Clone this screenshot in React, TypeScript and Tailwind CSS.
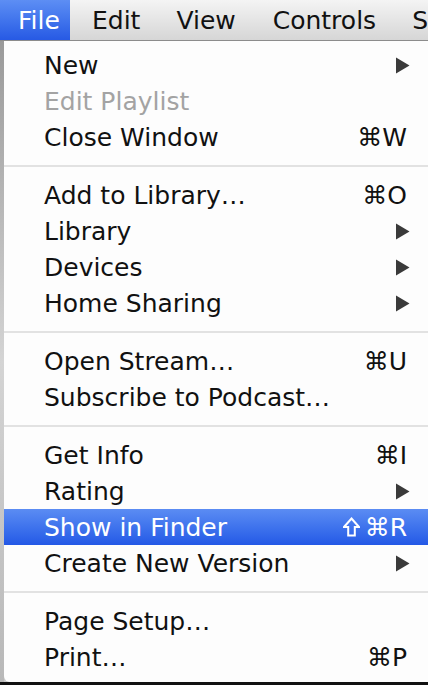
import React from 'react';

type Item = {
  label: string;
  shortcut?: string;
  shift?: boolean;
  submenu?: boolean;
  disabled?: boolean;
  active?: boolean;
};

const groups: Item[][] = [
  [
    { label: 'New', submenu: true },
    { label: 'Edit Playlist', disabled: true },
    { label: 'Close Window', shortcut: '⌘W' },
  ],
  [
    { label: 'Add to Library…', shortcut: '⌘O' },
    { label: 'Library', submenu: true },
    { label: 'Devices', submenu: true },
    { label: 'Home Sharing', submenu: true },
  ],
  [
    { label: 'Open Stream…', shortcut: '⌘U' },
    { label: 'Subscribe to Podcast…' },
  ],
  [
    { label: 'Get Info', shortcut: '⌘I' },
    { label: 'Rating', submenu: true },
    { label: 'Show in Finder', shortcut: '⌘R', shift: true, active: true },
    { label: 'Create New Version', submenu: true },
  ],
  [
    { label: 'Page Setup…' },
    { label: 'Print…', shortcut: '⌘P' },
  ],
];

function Arrow({ active }: { active?: boolean }) {
  return (
    <svg width="15" height="17" viewBox="0 0 15 17" className="mr-[18px]">
      <path d="M1 0.5 L14.5 8.5 L1 16.5 Z" fill={active ? '#ffffff' : '#3a3a3a'} />
    </svg>
  );
}

// outlined shift arrow
function Shift() {
  return (
    <svg width="17" height="20" viewBox="0 0 17 20" className="mr-[5px]">
      <path
        d="M8.5 1.5 L16 10 L11.8 10 L11.8 18.5 L5.2 18.5 L5.2 10 L1 10 Z"
        fill="none"
        stroke="currentColor"
        strokeWidth="2"
        strokeLinejoin="miter"
      />
    </svg>
  );
}

function Row({ item }: { item: Item }) {
  const color = item.active
    ? 'text-white bg-gradient-to-b from-[#5b8cf3] to-[#2458e6]'
    : item.disabled
      ? 'text-[#a3a3a3]'
      : 'text-[#111111]';
  return (
    <div className={`flex h-[36px] items-center justify-between pl-[40px] ${color}`}>
      <span>{item.label}</span>
      {item.shortcut && (
        <span className="mr-[21px] flex items-center">
          {item.shift && <Shift />}
          {item.shortcut}
        </span>
      )}
      {item.submenu && <Arrow active={item.active} />}
    </div>
  );
}

export default function App() {
  return (
    <div
      className="flex h-[685px] w-[428px] flex-col overflow-hidden bg-[#c9c9c9] text-[25px] leading-none"
      style={{ fontFamily: '"DejaVu Sans", "Liberation Sans", sans-serif' }}
    >
      <div className="flex h-[41px] shrink-0 items-stretch border-b border-[#8c8c8c] bg-gradient-to-b from-[#f4f4f4] to-[#d6d6d6] text-[#111]">
        <div className="flex w-[82px] items-center bg-gradient-to-b from-[#5d8ef4] to-[#2759e4] pl-[18px] text-white">File</div>
        <div className="flex items-center pl-[22px]">Edit</div>
        <div className="flex items-center pl-[36px]">View</div>
        <div className="flex items-center pl-[37px]">Controls</div>
        <div className="flex items-center pl-[36px]">S</div>
      </div>
      <div className="flex flex-1">
        <div className="w-[4px] bg-gradient-to-b from-[#9a9a9a] via-[#d4d4d4] to-[#b8b8b8]" />
        <div className="flex flex-1 flex-col rounded-bl-[6px] bg-[#fdfdfd] pb-[7px] pt-[6px]">
          {groups.map((g, gi) => (
            <div key={gi}>
              {gi > 0 && (
                <div className="flex h-[22px] items-center">
                  <div className="h-[2px] w-full bg-[#e2e2e2]" />
                </div>
              )}
              {g.map((item) => (
                <Row key={item.label} item={item} />
              ))}
            </div>
          ))}
        </div>
      </div>
      <div className="h-[3px] shrink-0 bg-[#111]" />
    </div>
  );
}
